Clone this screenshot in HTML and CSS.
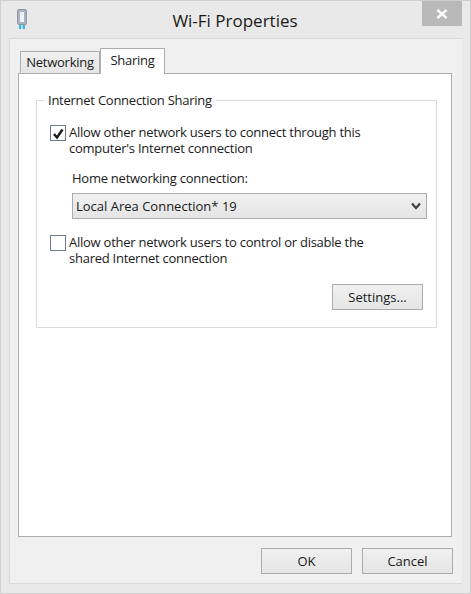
FILE: index.html
```html
<!DOCTYPE html>
<html lang="en">
<head>
  <meta charset="UTF-8">
  <title>Wi-Fi Properties</title>
  <link rel="stylesheet" href="styles.css">
</head>
<body>
  <div class="window">
    <div class="titlebar">
      <svg class="app-icon" width="12" height="21" viewBox="0 0 12 21">
        <rect x="1.5" y="0.5" width="9" height="15" rx="1.5" fill="#aab3c2" stroke="#8f98a8"/>
        <rect x="4" y="3" width="4" height="10" fill="#eef1f5"/>
        <rect x="3" y="16" width="6" height="4" fill="#3fb4e0"/>
        <rect x="5" y="16" width="2" height="4" fill="#a5e0f5"/>
      </svg>
      <div class="title">Wi-Fi Properties</div>
      <button class="close-btn">
        <svg width="12" height="10" viewBox="0 0 12 10"><path d="M1.5 1 L10.5 9 M10.5 1 L1.5 9" stroke="#fff" stroke-width="2.4"/></svg>
      </button>
    </div>
    <div class="client">
      <div class="tabs">
        <div class="tab">Networking</div>
        <div class="tab active">Sharing</div>
      </div>
      <div class="panel">
        <fieldset class="group">
          <legend>Internet Connection Sharing</legend>
          <div class="check-row first">
            <span class="checkbox">
              <svg width="13" height="13" viewBox="0 0 13 13"><path d="M2 7 L5 10.5 L10.5 2.5" fill="none" stroke="#1c1c1c" stroke-width="2.4"/></svg>
            </span>
            <span class="check-label">Allow other network users to connect through this<br>computer's Internet connection</span>
          </div>
          <div class="field-label">Home networking connection:</div>
          <div class="select">
            <span>Local Area Connection* 19</span>
            <svg width="10" height="8" viewBox="0 0 10 8"><path d="M1 1.5 L5 6 L9 1.5" fill="none" stroke="#444" stroke-width="2.2"/></svg>
          </div>
          <div class="check-row second">
            <span class="checkbox"></span>
            <span class="check-label">Allow other network users to control or disable the<br>shared Internet connection</span>
          </div>
          <div class="settings-row">
            <button class="btn">Settings...</button>
          </div>
        </fieldset>
      </div>
      <div class="actions">
        <button class="btn">OK</button>
        <button class="btn">Cancel</button>
      </div>
    </div>
  </div>
</body>
</html>
```

FILE: styles.css
```css
html, body {
  margin: 0;
  padding: 0;
}
body {
  width: 471px;
  height: 594px;
  font-family: "Open Sans", "Liberation Sans", sans-serif;
  font-size: 13px;
  letter-spacing: -0.25px;
  color: #1a1a1a;
}
.window {
  box-sizing: border-box;
  width: 471px;
  height: 594px;
  background: #e9e9e9;
  border: 1px solid #cfcfcf;
  display: flex;
  flex-direction: column;
  padding: 0 8px 9px 8px;
}
.titlebar {
  height: 37px;
  display: flex;
  position: relative;
  justify-content: center;
  align-items: flex-start;
}
.app-icon {
  position: absolute;
  left: 7px;
  top: 8px;
}
.title {
  font-size: 17px;
  letter-spacing: 0;
  line-height: 24px;
  margin-top: 8px;
  margin-left: -1px;
}
.close-btn {
  position: absolute;
  right: 0;
  top: 0;
  width: 40px;
  height: 25px;
  border: none;
  padding: 0;
  background: #b9b9b9;
  display: flex;
  align-items: center;
  justify-content: center;
}
.client {
  flex: 1;
  background: #f0f0f0;
  border: 1px solid #d9d9d9;
  border-right: none;
  padding: 9px 10px 9px 8px;
  display: flex;
  flex-direction: column;
}
.tabs {
  display: flex;
  align-items: flex-end;
  height: 25px;
  padding-left: 2px;
}
.tab {
  box-sizing: border-box;
  height: 22px;
  width: 80px;
  border: 1px solid #acacac;
  border-bottom: none;
  background: linear-gradient(#f0f0f0, #e5e5e5);
  text-align: center;
  line-height: 21px;
}
.tab.active {
  position: relative;
  height: 26px;
  width: 65px;
  margin-bottom: -1px;
  background: #fff;
  line-height: 23px;
  z-index: 1;
}
.panel {
  flex: 1;
  background: #fff;
  border: 1px solid #acacac;
  padding: 17px 14px 0 17px;
}
.group {
  box-sizing: border-box;
  margin: 0;
  height: 237px;
  border: 1px solid #dcdcdc;
  padding: 0;
}
.group legend {
  margin-left: 7px;
  padding: 0 4px;
  line-height: 18px;
}
.check-row {
  display: flex;
  align-items: flex-start;
  gap: 3px;
  line-height: 16px;
  padding-left: 13px;
}
.first {
  margin-top: 15px;
}
.second {
  margin-top: 15px;
}
.checkbox {
  box-sizing: border-box;
  width: 16px;
  height: 16px;
  margin-top: 1px;
  border: 1px solid #707a8a;
  background: #fff;
  display: flex;
  align-items: center;
  justify-content: center;
}
.field-label {
  margin: 13px 0 0 35px;
  line-height: 18px;
}
.select {
  box-sizing: border-box;
  height: 26px;
  margin: 6px 9px 0 35px;
  border: 1px solid #acacac;
  background: linear-gradient(#f0f0f0, #e5e5e5);
  padding: 0 5px 0 3px;
  letter-spacing: 0;
  display: flex;
  align-items: center;
  justify-content: space-between;
}
.settings-row {
  display: flex;
  justify-content: flex-end;
  margin: 18px 13px 0 0;
}
.btn {
  box-sizing: border-box;
  width: 91px;
  height: 26px;
  border: 1px solid #acacac;
  background: linear-gradient(#f0f0f0, #e5e5e5);
  font-family: inherit;
  font-size: 13px;
  color: #1a1a1a;
  padding: 0;
}
.actions {
  display: flex;
  justify-content: flex-end;
  gap: 10px;
  margin-top: 11px;
  margin-right: -1px;
}
```
